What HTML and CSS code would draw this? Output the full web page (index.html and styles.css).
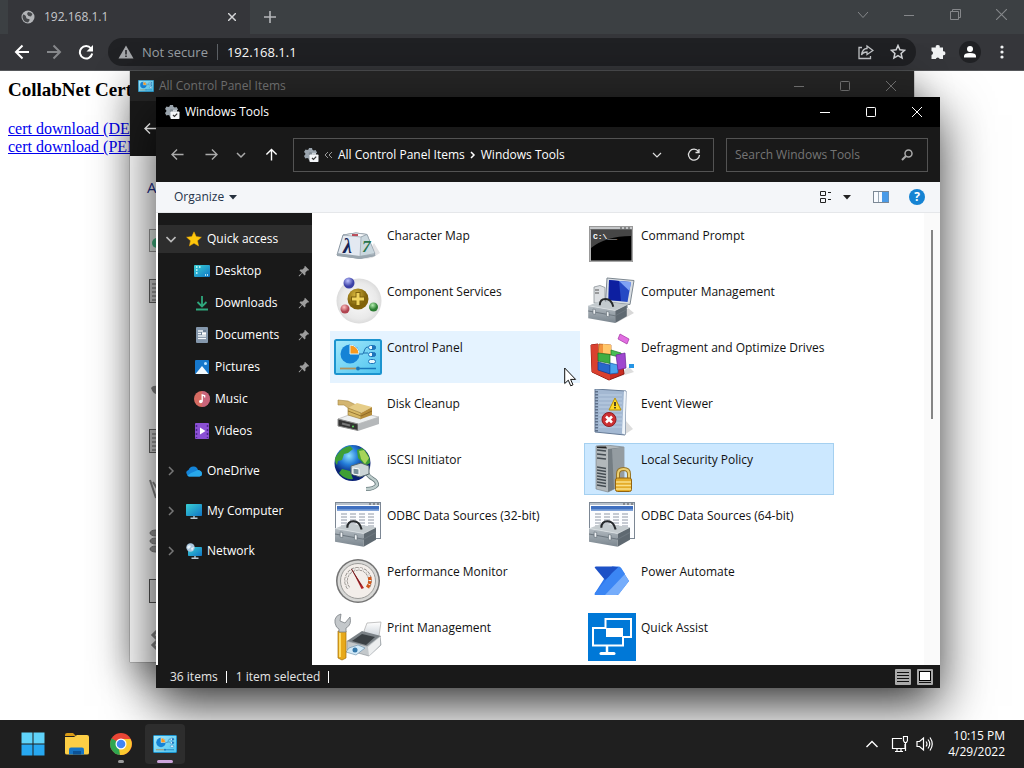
FILE: index.html
```html
<!DOCTYPE html>
<html lang="en">
<head>
  <meta charset="UTF-8" />
  <meta name="viewport" content="width=device-width, initial-scale=1.0"/>
  <title>Windows Tools</title>
  <link rel="stylesheet" href="styles.css">
</head>
<body>

<!-- Shared icons -->
<svg class="defs" aria-hidden="true">
  <defs>
    <linearGradient id="steel" x1="0" y1="0" x2="0" y2="1"><stop offset="0" stop-color="#b3bbc1"/><stop offset="1" stop-color="#7a858e"/></linearGradient>
    <linearGradient id="cpBg" x1="0" y1="0" x2="1" y2="1"><stop offset="0" stop-color="#a5e9fb"/><stop offset="1" stop-color="#4cc3ef"/></linearGradient>
    <linearGradient id="screen" x1="0" y1="0" x2="1" y2="1"><stop offset="0" stop-color="#3ad0d4"/><stop offset="1" stop-color="#0f74c6"/></linearGradient>
    <linearGradient id="paper" x1="0" y1="0" x2="0" y2="1"><stop offset="0" stop-color="#ffffff"/><stop offset="1" stop-color="#b9c3cc"/></linearGradient>
  </defs>
  <symbol id="tools" viewBox="0 0 16 16">
    <path d="M6 1h3l.4 1.8 1.4.7L12.500 3l1.600 2.500-1.300 1.300v1.700H7v5l-1-.2-.5-1.700-1.400-.7-1.800.5L1 8.900l1.300-1.300V6.200L1 4.900l1.500-2.500 1.700.5L5.500 2.500z" fill="#9aa4ad"/>
    <circle cx="7.500" cy="6.800" r="1.800" fill="#808a92"/>
    <path d="M9.500 7.500V6.300h3v1.200" fill="none" stroke="#d8dde2" stroke-width="1"/>
    <rect x="6.500" y="7.500" width="9" height="7.500" rx=".8" fill="#f4f6f8"/>
    <path d="M9 11l1.500 1.500 2.700-2.800" fill="none" stroke="#333" stroke-width="1.200"/>
  </symbol>
  <symbol id="cpanel" viewBox="0 0 48 36">
    <rect x="1" y="1" width="46" height="34" rx="1.500" fill="url(#cpBg)" stroke="#1c94cf" stroke-width="2"/>
    <circle cx="16" cy="15" r="9.500" fill="#1583d6"/>
    <path d="M16 15V6a9 9 0 0 1 9 9z" fill="#f9991d" stroke="#d8f5fd" stroke-width="1"/>
    <path d="M25 15h4l2-5q.5-2 3-2M30 14h4" fill="none" stroke="#1d6fae" stroke-width="1"/>
    <g fill="#e8f8fe" stroke="#1d75bb" stroke-width="1"><rect x="34.500" y="6.500" width="7" height="4" rx="2"/><rect x="34.500" y="13.500" width="7" height="4" rx="2"/><rect x="34.500" y="20.500" width="7" height="4" rx="2"/></g>
    <path d="M38 6.500h2a2 2 0 0 1 0 4h-2zM38 13.500h2a2 2 0 0 1 0 4h-2z" fill="#1d75bb"/>
    <path d="M6 29.500h16" stroke="#b0925c" stroke-width="1.800"/><path d="M26 29.500h16" stroke="#1878ba" stroke-width="1.500"/><circle cx="24" cy="29.500" r="2" fill="#1878ba"/>
  </symbol>
  <symbol id="toolbox" viewBox="0 0 42 28">
    <path d="M1 9l13-5 27 4-12 6z" fill="#c3cace"/>
    <path d="M1 9l28 5v13L1 22z" fill="url(#steel)"/>
    <path d="M29 14l12-6v12l-12 7z" fill="#5f6971"/>
    <path d="M1 9l28 5 12-6" fill="none" stroke="#dfe4e7" stroke-width=".7"/>
    <path d="M1 14.500l28 5 12-6.500" fill="none" stroke="#6c767e" stroke-width="1"/>
    <path d="M13 8.500Q13 2 19 2t8 8" fill="none" stroke="#26292c" stroke-width="2"/>
    <path d="M6 12.500l2.500.5v5L6 17.500zM20 15l2.500.5v5L20 20z" fill="#f0f3f5" stroke="#5f6a72" stroke-width=".6"/>
  </symbol>
  <symbol id="odbc" viewBox="0 0 48 48">
    <rect x="1.500" y="1.500" width="45" height="36" fill="#fcfdff" stroke="#7c8794"/>
    <rect x="2" y="2" width="44" height="2" fill="#b9c2cc"/><path d="M35 3h2M39 3h2M43 3h2" stroke="#555" stroke-width="1"/>
    <rect x="3" y="5" width="42" height="4.500" fill="#3f6fbf"/><rect x="3" y="8" width="42" height="1.500" fill="#6e97d3"/>
    <path d="M7 13h35M7 16h35M7 19h35M7 22h35M7 25h35M7 29h35" stroke="#9098a6" stroke-width="1" stroke-dasharray="6 3"/>
    <use href="#toolbox" x="0" y="18" width="43" height="29"/>
  </symbol>
  <symbol id="pin" viewBox="0 0 12 12"><path d="M7 .8L11.200 5l-1 .6-.8-.1-2 2 .1 2.100-.9.900-2.400-2.400L1.600 11.200H.8v-.8l3.100-2.600L1.500 5.400l.9-.9 2.100.1 2-2-.1-.8z" fill="#9d9d9d"/></symbol>
  <symbol id="expand" viewBox="0 0 10 10"><path d="M3 1l4 4-4 4" fill="none" stroke="#777" stroke-width="1.500"/></symbol>
  <symbol id="min" viewBox="0 0 10 10"><path d="M0 5.500h10" stroke="currentColor"/></symbol>
  <symbol id="max" viewBox="0 0 10 10"><rect x=".5" y=".5" width="9" height="9" rx=".8" fill="none" stroke="currentColor"/></symbol>
  <symbol id="close" viewBox="0 0 10 10"><path d="M0 0l10 10M10 0L0 10" stroke="currentColor"/></symbol>
  <symbol id="arrow" viewBox="0 0 14 14"><path d="M13.500 7H1.500M6.500 1.500L1 7l5.500 5.500" fill="none" stroke="currentColor" stroke-width="1.500"/></symbol>
</svg>

<main class="desktop">
  <!-- Browser -->
  <section class="browser">
    <div class="tabs">
      <div class="tab">
        <svg width="14" height="14" viewBox="0 0 14 14"><circle cx="7" cy="7" r="6.500" fill="#b3b5b8"/><path d="M2 4.500Q5 5 5 7t2.500 2-.5 3.500Q2 12 1.500 7zM7 2q3 0 4.500 2L10 6.500 7.500 6 6 4z" fill="#46484b"/></svg>
        <span>192.168.1.1</span>
        <button aria-label="Close tab"><svg width="8" height="8" viewBox="0 0 10 10"><path d="M0 0l10 10M10 0L0 10" stroke="#d5d6d8" stroke-width="1.800"/></svg></button>
      </div>
      <button class="new-tab" aria-label="New tab"><svg width="12" height="12" viewBox="0 0 12 12"><path d="M6 0v12M0 6h12" stroke="#b5b7ba" stroke-width="1.600"/></svg></button>
      <div class="controls">
        <button aria-label="Search tabs"><svg width="10" height="10" viewBox="0 0 10 10"><path d="M0 2l5 5.500L10 2" fill="none" stroke="currentColor"/></svg></button>
        <button aria-label="Minimize"><svg width="10" height="10"><use href="#min"/></svg></button>
        <button aria-label="Restore"><svg width="11" height="11" viewBox="0 0 11 11"><path d="M.5 2.500h8v8h-8zM2.500 2.500v-2h8v8h-2" fill="none" stroke="currentColor"/></svg></button>
        <button aria-label="Close"><svg width="11" height="11"><use href="#close"/></svg></button>
      </div>
    </div>
    <div class="toolbar">
      <button aria-label="Back"><svg width="16" height="16" viewBox="0 0 16 16"><path d="M15 8H2M8.500 1.500L2 8l6.500 6.500" fill="none" stroke="#fff" stroke-width="2"/></svg></button>
      <button aria-label="Forward"><svg width="16" height="16" viewBox="0 0 16 16"><path d="M1 8h13M7.500 1.500L14 8l-6.500 6.500" fill="none" stroke="#86888b" stroke-width="2"/></svg></button>
      <button aria-label="Reload"><svg width="16" height="16" viewBox="0 0 16 16"><path d="M13 4.500A6.200 6.200 0 1 0 14.200 9.500" fill="none" stroke="#fff" stroke-width="2"/><path d="M15 1v6.500H8.500z" fill="#fff"/></svg></button>
      <div class="omnibox">
        <svg width="16" height="14" viewBox="0 0 16 14"><path d="M8 .5L15.500 13.500H.5z" fill="#a5a7aa"/><path d="M8 5v4.500M8 10.500v1.600" stroke="#202124" stroke-width="1.500"/></svg>
        <label for="url">Not secure</label>
        <input id="url" type="text" value="192.168.1.1">
        <button aria-label="Share"><svg width="16" height="16" viewBox="0 0 16 16"><path d="M4 3.500H1v11h11.500V12M9 2l6 4.500-6 4V8q-4 0-5.500 3Q4.500 4.500 9 4.500z" fill="none" stroke="#c5c7ca" stroke-width="1.300"/></svg></button>
        <button aria-label="Bookmark"><svg width="16" height="16" viewBox="0 0 16 16"><path d="M8 1.500l1.900 4.300 4.700.5-3.500 3.200 1 4.600L8 11.700l-4.100 2.400 1-4.600L1.400 6.300l4.700-.5z" fill="none" stroke="#d5d7da" stroke-width="1.500"/></svg></button>
      </div>
      <button aria-label="Extensions"><svg width="16" height="16" viewBox="0 0 16 16"><path d="M2 3.500h3.800a2 2 0 1 1 3.900 0H13v3.800a2 2 0 1 1 0 3.900V15H9.700a2 2 0 0 0-3.900 0H1.500v-4a2 2 0 0 0 0-3.900V3.500z" fill="#f1f3f4"/></svg></button>
      <button aria-label="Profile"><svg width="22" height="22" viewBox="0 0 22 22"><circle cx="11" cy="11" r="11" fill="#202124"/><circle cx="11" cy="8" r="3" fill="#fff"/><path d="M5 16.500v-1.500q0-3 6-3t6 3v1.500z" fill="#fff"/></svg></button>
      <button aria-label="Menu"><svg width="16" height="16" viewBox="0 0 16 16" fill="#f1f3f4"><circle cx="8" cy="3" r="1.600"/><circle cx="8" cy="8" r="1.600"/><circle cx="8" cy="13" r="1.600"/></svg></button>
    </div>
    <article class="page">
      <h3>CollabNet Cert</h3>
      <a href="#der">cert download (DER)</a>
      <a href="#pem">cert download (PEM)</a>
    </article>
  </section>

  <!-- Control panel window, behind -->
  <section class="window back-window">
    <div class="titlebar">
      <svg width="16" height="12"><use href="#cpanel"/></svg>
      <span>All Control Panel Items</span>
      <div class="controls">
        <button aria-label="Minimize"><svg width="10" height="10"><use href="#min"/></svg></button>
        <button aria-label="Maximize"><svg width="10" height="10"><use href="#max"/></svg></button>
        <button aria-label="Close"><svg width="10" height="10"><use href="#close"/></svg></button>
      </div>
    </div>
    <div class="back-nav"><button aria-label="Back"><svg width="13" height="13"><use href="#arrow"/></svg></button></div>
    <div class="back-body">
      <h2>Adjust</h2>
      <div class="back-icons">
        <svg width="24" height="24" viewBox="0 0 24 24"><rect x=".5" y=".5" width="23" height="22" fill="#e8eee9" stroke="#999"/><circle cx="8" cy="14" r="5" fill="#42b883"/></svg>
        <svg width="24" height="24" viewBox="0 0 24 24"><rect x=".5" y=".5" width="23" height="23" fill="#d5d5d5" stroke="#666"/><path d="M3 5h18M3 9h18M3 13h18M3 17h18M3 21h18" stroke="#666"/></svg>
        <svg width="24" height="24" viewBox="0 0 24 24"></svg>
        <svg width="24" height="24" viewBox="0 0 24 24"><path d="M2 9q2-3 6-2v8q-4 0-6-6z" fill="#888"/></svg>
        <svg width="24" height="24" viewBox="0 0 24 24"><rect x=".5" y=".5" width="23" height="23" fill="#d5d5d5" stroke="#666"/><path d="M3 5h18M3 9h18M3 13h18M3 17h18M3 21h18" stroke="#666"/></svg>
        <svg width="24" height="24" viewBox="0 0 24 24"><path d="M1 1l6 18M4 3l5 8" stroke="#888" stroke-width="2"/></svg>
        <svg width="24" height="24" viewBox="0 0 24 24"><ellipse cx="7" cy="4" rx="6" ry="3" fill="#999" stroke="#777"/><ellipse cx="7" cy="12" rx="6" ry="3" fill="#999" stroke="#777"/><ellipse cx="7" cy="20" rx="6" ry="3" fill="#999" stroke="#777"/></svg>
        <svg width="24" height="24" viewBox="0 0 24 24"><rect x=".5" y=".5" width="23" height="23" fill="#e2e2e2" stroke="#555"/></svg>
        <svg width="24" height="24" viewBox="0 0 24 24"><path d="M8 2L4 6l4 4M8 12l-4 4 4 4" stroke="#888" stroke-width="3" fill="none"/></svg>
      </div>
    </div>
  </section>

  <!-- Windows Tools window -->
  <section class="window tools-window">
    <div class="titlebar">
      <svg width="16" height="16"><use href="#tools"/></svg>
      <span>Windows Tools</span>
      <div class="controls">
        <button aria-label="Minimize"><svg width="10" height="10"><use href="#min"/></svg></button>
        <button aria-label="Maximize"><svg width="10" height="10"><use href="#max"/></svg></button>
        <button aria-label="Close"><svg width="10" height="10"><use href="#close"/></svg></button>
      </div>
    </div>

    <nav class="navbar">
      <button class="dim" aria-label="Back"><svg width="13" height="13"><use href="#arrow"/></svg></button>
      <button class="dim" aria-label="Forward"><svg width="13" height="13" viewBox="0 0 14 14"><path d="M.5 7h12M7.500 1.500L13 7l-5.500 5.500" fill="none" stroke="currentColor" stroke-width="1.500"/></svg></button>
      <button class="dim narrow" aria-label="Recent locations"><svg width="10" height="10" viewBox="0 0 10 10"><path d="M1 3l4 4 4-4" fill="none" stroke="currentColor" stroke-width="1.500"/></svg></button>
      <button aria-label="Up"><svg width="13" height="13" viewBox="0 0 14 14"><path d="M7 13.500V1.500M1.500 7L7 1.500 12.500 7" fill="none" stroke="currentColor" stroke-width="1.500"/></svg></button>
      <div class="address">
        <svg width="16" height="16"><use href="#tools"/></svg>
        <svg width="9" height="8" viewBox="0 0 9 8"><path d="M4 1L1 4l3 3M8 1L5 4l3 3" fill="none" stroke="#999"/></svg>
        <button class="crumb">All Control Panel Items</button>
        <svg width="6" height="8" viewBox="0 0 6 8"><path d="M1 1l3 3-3 3" fill="none" stroke="#fff" stroke-width="1.500"/></svg>
        <button class="crumb">Windows Tools</button>
        <button class="drop" aria-label="Previous locations"><svg width="10" height="10" viewBox="0 0 10 10"><path d="M1 3l4 4 4-4" fill="none" stroke="#ddd" stroke-width="1.200"/></svg></button>
        <button class="reload" aria-label="Refresh"><svg width="14" height="14" viewBox="0 0 14 14"><path d="M11.500 3.500A5.500 5.500 0 1 0 12.500 7M12 1v3.500H8.500" fill="none" stroke="#ddd" stroke-width="1.300"/></svg></button>
      </div>
      <div class="search">
        <input type="text" aria-label="Search Windows Tools" placeholder="Search Windows Tools">
        <svg width="12" height="12" viewBox="0 0 12 12"><circle cx="7.500" cy="4.500" r="3.500" fill="none" stroke="#aaa" stroke-width="1.500"/><path d="M5 7L1 11" stroke="#aaa" stroke-width="2"/></svg>
      </div>
    </nav>

    <div class="commands">
      <button class="organize">Organize <svg width="8" height="5" viewBox="0 0 8 5"><path d="M0 0h8L4 4.500z" fill="#26303d"/></svg></button>
      <button aria-label="Change view"><svg width="12" height="12" viewBox="0 0 12 12"><path d="M.5.5h5v4h-5zM.5 7.500h5v4h-5z" fill="none" stroke="#222"/><path d="M8 1.500h4M8 8.500h4" stroke="#222" stroke-dasharray="3 1"/></svg></button>
      <button class="more" aria-label="More views"><svg width="8" height="5" viewBox="0 0 8 5"><path d="M0 0h8L4 4.500z" fill="#222"/></svg></button>
      <button class="pane" aria-label="Preview pane"><svg width="16" height="12" viewBox="0 0 16 12"><rect x=".5" y=".5" width="15" height="11" fill="#f8fbff" stroke="#7b8895"/><path d="M5.500 1v10" stroke="#9aa8b5"/><rect x="9" y="1" width="6.500" height="10" fill="#4a9be8"/></svg></button>
      <button aria-label="Help"><svg width="16" height="16" viewBox="0 0 16 16"><circle cx="8" cy="8" r="8" fill="#1583d3"/><text class="help" x="8" y="12" text-anchor="middle">?</text></svg></button>
    </div>

    <div class="content">
      <aside class="sidebar">
        <a href="#quick" class="root selected"><svg width="10" height="10" viewBox="0 0 10 10"><path d="M.5 3L5 7.500 9.500 3" fill="none" stroke="#bbb" stroke-width="1.600"/></svg>
          <svg width="16" height="16" viewBox="0 0 16 16"><path d="M8 .8l2.200 4.800 5.200.6-3.900 3.500 1.100 5.200L8 12.300l-4.600 2.600 1.100-5.200L.6 6.200l5.200-.6z" fill="#fdc70c" stroke="#e8a307" stroke-width=".5"/></svg>Quick access</a>
        <a href="#desktop"><svg width="16" height="16" viewBox="0 0 16 16"><rect y="2" width="16" height="12" rx="1" fill="url(#screen)"/><path d="M2 4h1.500M5 4h1.500M2 7h1.500M2 10h1.500M11 12h1M13 12h1" stroke="#dff" stroke-width="1.300"/></svg>Desktop<svg class="pin" width="12" height="12"><use href="#pin"/></svg></a>
        <a href="#downloads"><svg width="16" height="16" viewBox="0 0 16 16"><path d="M8 1v10M3.500 7L8 11.500 12.500 7M2 14.500h12" fill="none" stroke="#2fa77d" stroke-width="1.800"/></svg>Downloads<svg class="pin" width="12" height="12"><use href="#pin"/></svg></a>
        <a href="#documents"><svg width="16" height="16" viewBox="0 0 16 16"><rect x="2" y="0" width="12" height="16" rx="1" fill="#8497ac"/><rect x="4" y="3" width="8" height="10" fill="#6e8196"/><path d="M4 4h5M4 6.500h3M4 9h8M4 11.500h8" stroke="#f4f8fb" stroke-width="1.300"/><rect x="8" y="5.300" width="4" height="2.500" fill="#fff"/></svg>Documents<svg class="pin" width="12" height="12"><use href="#pin"/></svg></a>
        <a href="#pictures"><svg width="16" height="16" viewBox="0 0 16 16"><rect x="1" y="1" width="14" height="14" rx="1" fill="#1677cb"/><path d="M1.500 15L8 7l6.500 8z" fill="#f3faff"/><circle cx="11.500" cy="4.500" r="1.500" fill="#bfe6ff"/></svg>Pictures<svg class="pin" width="12" height="12"><use href="#pin"/></svg></a>
        <a href="#music"><svg width="16" height="16" viewBox="0 0 16 16"><circle cx="8" cy="8" r="8" fill="#d66b62"/><path d="M8 0a8 8 0 0 1 0 16z" fill="#bf608c" opacity=".6"/><circle cx="6.800" cy="10.500" r="1.800" fill="#fff"/><path d="M8.200 10.500V4l2.500.8v1.700" fill="none" stroke="#fff" stroke-width="1.300"/></svg>Music</a>
        <a href="#videos"><svg width="16" height="16" viewBox="0 0 16 16"><rect x="1" width="14" height="16" rx="1" fill="#8a4fd3"/><path d="M2.500 2v13M13.500 2v13" stroke="#4d2590" stroke-width="1.500" stroke-dasharray="2 2"/><path d="M6 4.500l5.500 3.500L6 11.500z" fill="#fff"/></svg>Videos</a>
        <a href="#onedrive" class="root apart"><svg width="10" height="10"><use href="#expand"/></svg>
          <svg width="16" height="16" viewBox="0 0 16 16"><path d="M1 11.500Q-1 8 2.500 7 4 3 8 3.500q3 .3 4 3.500 4 .5 4 4 0 2-2.500 2.500H3Q1.500 13.300 1 11.500z" fill="#1484d8"/><path d="M5 10l7-3q4 .5 4 4 0 2-2.500 2.500H3Q2 13.200 1.500 12.500z" fill="#28a8ea"/></svg>OneDrive</a>
        <a href="#computer" class="root apart"><svg width="10" height="10"><use href="#expand"/></svg>
          <svg width="16" height="16" viewBox="0 0 16 16"><rect y="1" width="16" height="12" rx=".8" fill="url(#screen)"/><path d="M8 13v2M4.500 15.200h7" stroke="#b9c9d3" stroke-width="1.400"/></svg>My Computer</a>
        <a href="#network" class="root apart"><svg width="10" height="10"><use href="#expand"/></svg>
          <svg width="16" height="16" viewBox="0 0 16 16"><rect x="2" y="4" width="14" height="9" rx=".8" fill="url(#screen)"/><path d="M9 13v2M5.500 15.200h7" stroke="#b9c9d3" stroke-width="1.400"/><circle cx="4.500" cy="4.500" r="4.200" fill="#acc8df"/><path d="M1 4q2-3 4-1l-1 2-2 1zM5 5l3-1-2 4z" fill="#e8f4fb"/></svg>Network</a>
      </aside>

      <div class="items">
        <a href="#charmap" class="item">
          <svg width="48" height="48" viewBox="0 0 48 48"><path d="M30 38l10-16 6 10-8 5z" fill="#e4e4e6"/><path d="M9 14l13-2 11 1.500 8 21-15 3L3 34z" fill="#e3e9f1" stroke="#8794a0"/><path d="M9 14l13-2 11 1.500-6 2.500z" fill="#f7f9fb" stroke="#929ea8" stroke-width=".7"/><path d="M27 16l6-2.500 8 19-15 3z" fill="#cad7de" stroke="#8b99a2" stroke-width=".6"/><path d="M3 32l23 3 15-2v2l-15 3-23-3z" fill="#9ba7b0"/><path d="M18 14h6" stroke="#b53b4a" stroke-width="1.800"/><text class="lambda" x="9" y="32">λ</text><text class="seven" x="28" y="31">7</text></svg>
          <span>Character Map</span></a>
        <a href="#cmd" class="item">
          <svg width="48" height="48" viewBox="0 0 48 48"><rect x="1.500" y="5.500" width="43" height="35" fill="#000" stroke="#999" /><rect x="2" y="6" width="42" height="2.500" fill="#c5c7c9"/><path d="M32 7h2M36 7h2M40 7h2" stroke="#444"/><path d="M3 9h40v6Q18 15 3 27z" fill="#464646"/><path d="M2.500 8.500v31.500h41.500V8.500" fill="none" stroke="#b5b5b5"/><text class="prompt" x="5" y="18">C:\__</text></svg>
          <span>Command Prompt</span></a>
        <a href="#comexp" class="item">
          <svg width="48" height="48" viewBox="0 0 48 48"><defs><radialGradient id="disc"><stop offset="0" stop-color="#fafafa"/><stop offset=".8" stop-color="#e9e9e9"/><stop offset="1" stop-color="#dcdcdc"/></radialGradient><radialGradient id="gold" cx=".4" cy=".3"><stop offset="0" stop-color="#d9b93e"/><stop offset="1" stop-color="#80620b"/></radialGradient><radialGradient id="blue" cx=".4" cy=".3"><stop offset="0" stop-color="#bfc4ff"/><stop offset="1" stop-color="#3b40a6"/></radialGradient><radialGradient id="red" cx=".4" cy=".3"><stop offset="0" stop-color="#ffc1c1"/><stop offset="1" stop-color="#b04450"/></radialGradient><radialGradient id="green" cx=".4" cy=".3"><stop offset="0" stop-color="#b5efb1"/><stop offset="1" stop-color="#2b7d31"/></radialGradient></defs><circle cx="25" cy="24" r="22.500" fill="url(#disc)"/><circle cx="24" cy="22" r="10.500" fill="url(#gold)"/><path d="M24 15v14M17 22h14" stroke="#7d610d" stroke-width="5"/><path d="M24 16v12M18 22h12" stroke="#f0d45e" stroke-width="3"/><circle cx="15" cy="6" r="5.500" fill="url(#blue)"/><circle cx="11" cy="32" r="4.500" fill="url(#red)"/><circle cx="39.500" cy="30" r="4.500" fill="url(#green)"/></svg>
          <span>Component Services</span></a>
        <a href="#compmgmt" class="item">
          <svg width="48" height="48" viewBox="0 0 48 48"><path d="M28 46l18-10-6-5z" fill="#d8d8d8"/><path d="M6 10l6-1.500 5 2V26H6z" fill="#dcdfe2" stroke="#8d9499" stroke-width=".8"/><path d="M7 13h4M7 16h4" stroke="#555"/><path d="M19 1l27 2.500-4 24L17.500 25z" fill="#d8dde3" stroke="#7d8891"/><path d="M21 3l22 2-3.500 20-19-2z" fill="#2549c4"/><path d="M21 3l10 1 2 20-12.500-1z" fill="#0d1fa0"/><path d="M31 4l12 1-1.500 9z" fill="#7fa2f4"/><path d="M24 26l-4 5h20v-4z" fill="#aeb7be"/><use href="#toolbox" x="-1" y="20" width="41" height="27"/></svg>
          <span>Computer Management</span></a>
        <a href="#control" class="item hovered">
          <svg width="48" height="48" viewBox="0 0 48 48"><use href="#cpanel" y="6" width="48" height="36"/></svg>
          <span>Control Panel</span></a>
        <a href="#defrag" class="item">
          <svg width="48" height="48" viewBox="0 0 48 48"><path d="M24 46l22-7-5-5z" fill="#ddd"/><path d="M3 12l7-1v22l15 4 10-3 1 7-15 6-17-8z" fill="#c92d22" stroke="#8e1710"/><path d="M3 12l7-1v25l12 5v6L4 39z" fill="#d9402f"/><path d="M11 11l12 1v10H10z" fill="#f1923b" stroke="#b1540f" stroke-width=".7"/><path d="M15 11l8 1v9l-8-1z" fill="#ffc66a"/><path d="M10 20l12 1.500v9L10 28z" fill="#3dae43" stroke="#1d7222" stroke-width=".7"/><path d="M23 17l10 3 2 5-12-3z" fill="#48bd55" stroke="#207b2a" stroke-width=".7"/><path d="M10 29l12 3v9l-12-4z" fill="#2867cb" stroke="#103a91" stroke-width=".7"/><path d="M22 30l8 2v8l-8 1z" fill="#4ba3ed" stroke="#1557aa" stroke-width=".7"/><path d="M28 22l9-2 1 15-8 2z" fill="#9f47cf" stroke="#682398" stroke-width=".7"/><path d="M30 6l9 5 2-5-9-5z" fill="#e16ee1" stroke="#a232a2" stroke-width=".7"/><path d="M41 31h5v4h-5z" fill="#2695e5"/></svg>
          <span>Defragment and Optimize Drives</span></a>
        <a href="#cleanup" class="item">
          <svg width="48" height="48" viewBox="0 0 48 48"><path d="M4 30l19-7 22 5-21 7z" fill="#edf0f1" stroke="#aaa" stroke-width=".6"/><path d="M4 30l20 5v6.500L4 37z" fill="#333" stroke="#8d8d8d"/><path d="M24 35l21-7v7l-21 7z" fill="#b5b8ba"/><path d="M8 34.500l8 2" stroke="#777" stroke-width="2"/><circle cx="19" cy="37.500" r="1" fill="#5cdb5c"/><path d="M4 11l10 1 10 5-6 5-8-6H4z" fill="#d3b570" stroke="#a58742" stroke-width=".6"/><path d="M14 19l9-5 15 4-11 6z" fill="#e6cd88"/><path d="M14 19l13 5v6l-13-4z" fill="#d7b863" stroke="#947330" stroke-width=".6"/><path d="M27 24l11-6v8l-11 4z" fill="#b58c3a"/><path d="M14 22l13 5 11-5" fill="none" stroke="#7e5c20" stroke-width=".7"/></svg>
          <span>Disk Cleanup</span></a>
        <a href="#eventvwr" class="item">
          <svg width="48" height="48" viewBox="0 0 48 48"><path d="M36 46l9-6-7-8z" fill="#ddd"/><path d="M7 0l31 2-1 44-30-3z" fill="#a3b8d2" stroke="#667b96"/><path d="M36 2l2 .5-1 43-3-1z" fill="#eef4fa"/><path d="M11 6h23M11 10h23M11 14h23M11 18h23M11 22h23M11 26h23M11 30h23M11 34h23M11 38h23" stroke="#bccfe4"/><path d="M8.500 2v41" stroke="#5f7089" stroke-width="3" stroke-dasharray="1.500 1.500"/><path d="M27 9l6 12H21z" fill="#ffda27" stroke="#b79008"/><path d="M27 13v4M27 18v1.500" stroke="#222" stroke-width="1.600"/><circle cx="21" cy="30.500" r="7" fill="#cd3033" stroke="#8f1c20"/><path d="M18 27.500l6 6M24 27.500l-6 6" stroke="#fff" stroke-width="2.500"/></svg>
          <span>Event Viewer</span></a>
        <a href="#iscsi" class="item">
          <svg width="48" height="48" viewBox="0 0 48 48"><defs><radialGradient id="ocean" cx=".4" cy=".3"><stop offset="0" stop-color="#8fe3ff"/><stop offset=".5" stop-color="#237bd8"/><stop offset="1" stop-color="#0a2376"/></radialGradient></defs><circle cx="18.500" cy="18" r="18" fill="url(#ocean)"/><path d="M3 10Q8 2 16 1l3 3-5 4-4 1-2 6-4 1-1 4Q-1 15 3 10zM23 5l5-2q8 6 8 15l-5 3-3-4-4-4zM8 24l8 2 3 8q-8 1-14-6z" fill="#3f9f35"/><path d="M25 6l5-1 5 8-4 6-4-5z" fill="#a6d45b"/><path d="M32 27q3 5 7 7t4 6q-3 4-11 4" fill="none" stroke="#687b7e" stroke-width="4"/><path d="M32 27q3 5 7 7t4 6q-3 4-11 4" fill="none" stroke="#bdcccb" stroke-width="2.500"/><path d="M17 21l10-3 8 3v8l-9 3-9-3z" fill="#cbd5d7" stroke="#56676c"/><path d="M19 23l6 1v6l-6-1z" fill="#789098" stroke="#fff"/></svg>
          <span>iSCSI Initiator</span></a>
        <a href="#secpol" class="item selected">
          <svg width="48" height="48" viewBox="0 0 48 48"><path d="M8 1l10-1 18 2v37l-16 8L8 44z" fill="#b2b8bb" stroke="#737b80" stroke-width=".6"/><path d="M20 4l16-2v37l-16 8z" fill="#747d83"/><path d="M24 4l12-2v37l-10 5z" fill="#949ca1"/><path d="M9 5l9 1M9 9l9 1M9 13l9 1M9 22l9 1.500M9 25l9 1.500M9 28l9 1.500M9 31l9 1.500M9 34l9 1.500M9 37l9 1.500M9 40l9 1.500" stroke="#454d53" stroke-width="1.500"/><path d="M9 1.500h9l1 2-10-.5z" fill="#222"/><path d="M30 35v-6q0-5 5.500-5t5.500 5v6" fill="none" stroke="#977528" stroke-width="4"/><path d="M30 35v-6q0-5 5.500-5t5.500 5v6" fill="none" stroke="#edd073" stroke-width="2"/><rect x="27.500" y="33" width="16" height="13.500" rx="2" fill="#e4ac29" stroke="#926412"/><path d="M28 37h15M28 40.500h15M28 44h15" stroke="#fae088" stroke-width="1.300"/></svg>
          <span>Local Security Policy</span></a>
        <a href="#odbc32" class="item"><svg width="48" height="48"><use href="#odbc"/></svg><span>ODBC Data Sources (32-bit)</span></a>
        <a href="#odbc64" class="item"><svg width="48" height="48"><use href="#odbc"/></svg><span>ODBC Data Sources (64-bit)</span></a>
        <a href="#perfmon" class="item">
          <svg width="48" height="48" viewBox="0 0 48 48"><circle cx="24" cy="24" r="22" fill="#747474"/><circle cx="24" cy="24" r="20.500" fill="#d8d8d6"/><circle cx="24" cy="24" r="17.500" fill="#f3eeea" stroke="#9c9c9a"/><path d="M14.500 31a12 12 0 1 1 19.500-.5" fill="none" stroke="#8a8580" stroke-width="3.500" stroke-dasharray="3 1"/><path d="M14.500 31a12 12 0 1 1 19.500-.5" fill="none" stroke="#f5f2ef" stroke-width="2" stroke-dasharray="3 1"/><path d="M35.500 20q1.500 6-2.500 11" fill="none" stroke="#d1581b" stroke-width="3.500" stroke-dasharray="3 1"/><path d="M17.500 12L30 31l-2.500 1z" fill="#b22327"/><path d="M17.500 12L27 28" stroke="#712022" stroke-width="1"/></svg>
          <span>Performance Monitor</span></a>
        <a href="#automate" class="item">
          <svg width="48" height="48" viewBox="0 0 48 48"><path d="M24 9.500h6q2 0 3 2L41 24 30 38H8q-2 0-1-2z" fill="#2e78ee"/><path d="M32.500 11L41 24 31 37q-1 1-3 1H15l17-20z" fill="#76adfb"/><path d="M7 11q-1-1.500 1-1.500h17l7 1L17 23z" fill="#1d51c6"/><path d="M24 16l7-6.500q1.500.5 2.500 2L37 17 17 38H8q-2 0-1-2z" fill="#3b86f4"/></svg>
          <span>Power Automate</span></a>
        <a href="#printmgmt" class="item">
          <svg width="48" height="48" viewBox="0 0 48 48"><path d="M30 18l3-8 14-1-2 14-5 6z" fill="url(#paper)" stroke="#ababab" stroke-width=".7"/><path d="M13 28l15-10 19 5-13 13z" fill="#7b8287"/><path d="M18 28l10-7 13 3-9 8z" fill="#3b4145"/><path d="M13 28l20 5 13-10 1 9-12 11-22-6z" fill="#c3c8cb" stroke="#848c91" stroke-width=".6"/><path d="M34 34l12-10v8L35 43z" fill="#eceeef"/><path d="M15 35l9-3 7 3-9 7-10-3z" fill="#d3eaf8" stroke="#6389a6" stroke-width=".6"/><circle cx="21" cy="37" r="2.500" fill="#3478aa"/><path d="M4 18h8v27l-4 2-4-2z" fill="#e7a91c" stroke="#a06e08" stroke-width=".7"/><path d="M6 20v24" stroke="#ffdc65" stroke-width="2"/><path d="M7 1Q0 3 1 10q1 5 4 6v3h7v-4q6-3 4-11l-5 6-5-2z" fill="#c4c8cb" stroke="#7c8286" stroke-width=".8"/></svg>
          <span>Print Management</span></a>
        <a href="#assist" class="item">
          <svg width="48" height="48" viewBox="0 0 48 48"><rect width="48" height="48" fill="#0078d7"/><path d="M17.500 15V6h25.500v18H35" fill="none" stroke="#fff" stroke-width="2"/><path d="M18 15H5v17.500h30V24" fill="none" stroke="#fff" stroke-width="2"/><rect x="18" y="15" width="17" height="9" fill="#fff"/><path d="M19 32v9" stroke="#fff" stroke-width="2.500"/><path d="M13 40.500h13" stroke="#fff" stroke-width="3" stroke-linecap="round"/></svg>
          <span>Quick Assist</span></a>
      </div>
      <div class="scrollbar"><div class="thumb"></div></div>
    </div>

    <footer class="status">
      <span>36 items</span>
      <span>1 item selected</span>
      <button aria-label="Details view"><svg width="16" height="16" viewBox="0 0 16 16"><rect width="16" height="16" rx="1" fill="#aaa"/><path d="M2 3.500h12M2 6.500h12M2 9.500h12M2 12.500h12" stroke="#111"/></svg></button>
      <button aria-label="Large icons view"><svg width="16" height="16" viewBox="0 0 16 16"><rect width="16" height="16" rx="1" fill="#aaa"/><rect x="2.500" y="2.500" width="11" height="9" fill="#fff" stroke="#000"/><path d="M2 13.500h12" stroke="#111"/></svg></button>
    </footer>
  </section>

  <svg class="cursor" width="13" height="20" viewBox="0 0 13 20"><path d="M.7 1v15.500l3.600-3.300 2.400 5.600 2.300-1-2.400-5.400h5z" fill="#fff" stroke="#111"/></svg>
</main>

<!-- Taskbar -->
<footer class="taskbar">
  <button aria-label="Start"><svg width="24" height="24" viewBox="0 0 24 24"><path d="M.5.500h11v11H.5zM12.500.500h11v11h-11z" fill="#5fd3fa"/><path d="M.5 12.500h11v11H.5zM12.500 12.500h11v11h-11z" fill="#27a8f1"/></svg></button>
  <button aria-label="File Explorer"><svg width="24" height="24" viewBox="0 0 24 24"><path d="M0 3q0-2 2-2h6l3 3H0z" fill="#d99a15"/><path d="M0 5h9l3-2h10q2 0 2 2v16q0 1.500-2 1.500H2Q0 22.500 0 21z" fill="#fcce45"/><path d="M4 22.500v-5q0-2 2-2h11q2 0 2 2v5z" fill="#1674c4"/><path d="M8 22.500V19h8v3.500z" fill="#0c5295"/></svg></button>
  <button aria-label="Chrome"><svg width="24" height="24" viewBox="0 0 24 24"><circle cx="12" cy="12" r="11" fill="#e94535"/><path d="M12 12L2.500 6.500A11 11 0 0 0 11 23z" fill="#2fa650"/><path d="M12 12l-1 11A11 11 0 0 0 21.500 7H12z" fill="#fbca2f"/><path d="M12 12l-5 3L2.500 6.500z" fill="#2fa650"/><path d="M16.500 14.500L11 23l-1-6z" fill="#fbca2f"/><circle cx="12" cy="12" r="5.500" fill="#fff"/><circle cx="12" cy="12" r="4.300" fill="#4285f4"/></svg></button>
  <button class="active" aria-label="Control Panel"><svg width="24" height="18"><use href="#cpanel"/></svg></button>
  <div class="tray">
    <button aria-label="Show hidden icons"><svg width="12" height="12" viewBox="0 0 12 12"><path d="M.5 9L6 3.500 11.500 9" fill="none" stroke="#fff" stroke-width="1.400"/></svg></button>
    <button aria-label="Network"><svg width="17" height="17" viewBox="0 0 17 17"><path d="M11 2.500H1.500v10H14V8M4 15.500h8M6 12.500v3M10 12.500v3M12.500.500h4v4l-1 2h-2l-1-2zM14.500 7v8" fill="none" stroke="#fff" stroke-width="1.200"/></svg></button>
    <button aria-label="Volume"><svg width="17" height="16" viewBox="0 0 17 16"><path d="M1 5.500h2.500L7.500 2v12l-4-3.500H1z" fill="none" stroke="#fff" stroke-width="1.200"/><path d="M10 5.500q2 2.500 0 5M12 3.500q3.500 4.500 0 9M14 1.500q4.500 6.500 0 13" fill="none" stroke="#fff" stroke-width="1.200"/></svg></button>
    <time>10:15 PM<br>4/29/2022</time>
  </div>
</footer>

</body>
</html>
```
FILE: styles.css
```css
* { box-sizing: border-box; }

body {
  margin: 0;
  height: 100vh;
  display: flex;
  flex-direction: column;
  overflow: hidden;
  font-family: "Segoe UI", "Open Sans", "Noto Sans", sans-serif;
  font-size: 12px;
  line-height: 16px;
}

button, input {
  font: inherit;
  color: inherit;
  background: transparent;
  border: none;
  padding: 0;
  margin: 0;
}

button {
  display: flex;
  align-items: center;
  justify-content: center;
}

input { outline: none; min-width: 0; }
a { text-decoration: none; }
svg { flex: none; }
.defs { position: absolute; width: 0; height: 0; }

.desktop {
  flex: 1;
  display: flex;
  position: relative;
  overflow: hidden;
}

/* Browser */
.browser {
  flex: 1;
  display: flex;
  flex-direction: column;
  background: white;
}

.tabs {
  display: flex;
  height: 34px;
  padding-left: 8px;
  background: #3c4043;
}

.tab {
  width: 242px;
  display: flex;
  align-items: center;
  gap: 9px;
  padding: 0 12px 0 13px;
  background: #35363a;
  color: #c5c7ca;
}

.tab button { margin-left: auto; width: 12px; height: 16px; }
.new-tab { width: 40px; }

.controls {
  display: flex;
  margin-left: auto;
}

.controls button { width: 46px; }
.tabs .controls { height: 29px; color: #85878a; }

.toolbar {
  display: flex;
  align-items: center;
  height: 37px;
  padding: 0 6px;
  background: #35363a;
  border-bottom: 1px solid #56585b;
}

.toolbar button { width: 32px; height: 32px; }

.omnibox {
  flex: 1;
  display: flex;
  align-items: center;
  height: 28px;
  margin: 0 6px;
  padding: 0 2px 0 10px;
  border-radius: 14px;
  background: #202124;
  font-size: 13px;
  color: #9aa0a6;
}

.omnibox label {
  margin: 0 9px 0 8px;
  padding-right: 9px;
  border-right: 1px solid #5f6368;
}

.omnibox input { flex: 1; color: white; }

.page {
  padding: 8px;
  font-family: "Liberation Serif", serif;
  font-size: 16px;
  line-height: 18px;
}

.page h3 {
  margin: 0 0 19px;
  font-size: 19px;
  line-height: 22px;
}

.page a {
  display: block;
  color: #0000ee;
  text-decoration: underline;
}

/* Windows */
.window {
  position: absolute;
  display: flex;
  flex-direction: column;
  width: 784px;
  height: 591px;
}

.back-window {
  left: 130px;
  top: 71px;
  background: white;
  box-shadow: 0 12px 36px rgba(0, 0, 0, 0.45), 0 0 1px #333;
}

.tools-window {
  left: 156px;
  top: 97px;
  background: white;
  box-shadow: 0 18px 48px rgba(0, 0, 0, 0.75);
}

.titlebar {
  flex: none;
  display: flex;
  align-items: center;
  gap: 5px;
  height: 30px;
  padding-left: 8px;
  background: black;
  color: white;
}

.titlebar .controls { align-self: stretch; }
.back-window .titlebar { background: #252525; color: #757575; }

.back-nav {
  flex: none;
  display: flex;
  align-items: center;
  height: 55px;
  padding-left: 14px;
  background: #191919;
  color: white;
}

.back-body {
  flex: 1;
  min-height: 0;
  padding: 22px 17px 0;
  overflow: hidden;
}

.back-body h2 {
  margin: 0 0 33px;
  font-size: 15px;
  line-height: 18px;
  font-weight: normal;
  color: #1e2f8c;
}

.back-icons {
  display: flex;
  flex-direction: column;
  gap: 26px;
  padding-left: 2px;
}

.navbar {
  flex: none;
  display: flex;
  align-items: center;
  height: 55px;
  padding: 0 12px 0 4px;
  background: #191919;
  color: white;
}

.navbar > button { width: 34px; height: 32px; }
.navbar > .narrow { width: 26px; }
.navbar .dim { color: #aaa; }

.address {
  flex: 1;
  display: flex;
  align-items: center;
  gap: 5px;
  height: 34px;
  margin: 0 12px 0 5px;
  padding: 0 12px 0 9px;
  border: 1px solid #535353;
}

.crumb { font-weight: 500; }
.drop { margin-left: auto; }
.reload { margin-left: 20px; }

.search {
  display: flex;
  align-items: center;
  width: 202px;
  height: 34px;
  padding: 0 14px 0 8px;
  border: 1px solid #535353;
}

.search input { flex: 1; }
.search input::placeholder { color: #757575; opacity: 1; }

.commands {
  display: flex;
  align-items: center;
  height: 31px;
  padding: 0 15px 0 18px;
  background: #f4f6f9;
  border-bottom: 1px solid #e5e7ea;
  color: #26344a;
}

.organize { margin-right: auto; gap: 5px; }
.more { margin: 0 22px 0 11px; }
.pane { margin-right: 20px; }

.help {
  font-size: 12px;
  font-weight: bold;
  fill: white;
}

.content {
  flex: 1;
  display: flex;
  min-height: 0;
  border-left: 2px solid white;
}

.sidebar {
  display: flex;
  flex-direction: column;
  gap: 4px;
  width: 154px;
  padding-top: 12px;
  background: #191919;
}

.sidebar a {
  display: flex;
  align-items: center;
  gap: 5px;
  height: 28px;
  padding: 0 2px 0 36px;
  color: white;
}

.sidebar .root { padding-left: 8px; }
.sidebar .root svg:first-child { margin-right: 5px; }
.sidebar .apart { margin-top: 8px; }
.sidebar .selected { background: #2d2d2d; }
.pin { margin-left: auto; }

.items {
  flex: 1;
  display: grid;
  grid-template-columns: 250px 250px;
  grid-auto-rows: 52px;
  gap: 4px;
  padding: 6px 0 0 18px;
  overflow: hidden;
}

.item {
  display: flex;
  gap: 5px;
  padding: 1px 3px;
  border: 1px solid transparent;
  color: #111;
}

.item span { padding-top: 7px; }
.item.hovered { background: #e5f3ff; }
.item.selected { background: #cce8ff; border-color: #a5d0f0; }

.lambda { font: bold italic 20px "Liberation Serif", serif; fill: #172356; }
.seven { font: bold italic 17px "Liberation Serif", serif; fill: #28744b; }
.prompt { font: bold 8px "Liberation Mono", monospace; fill: white; }

.scrollbar {
  width: 16px;
  padding: 17px 7px;
  background: #fafafa;
}

.thumb {
  height: 189px;
  background: #858585;
}

.status {
  display: flex;
  align-items: center;
  height: 23px;
  padding: 0 7px 0 14px;
  background: #191919;
  color: #e5e5e5;
}

.status span {
  display: flex;
  gap: 8px;
  margin-right: 9px;
}

.status span::after {
  content: "";
  width: 1px;
  height: 12px;
  align-self: center;
  background: white;
}

.status span + button { margin-left: auto; }
.status button + button { margin-left: 6px; }

.cursor {
  position: absolute;
  left: 564px;
  top: 367px;
}

/* Taskbar */
.taskbar {
  display: flex;
  align-items: center;
  gap: 4px;
  height: 48px;
  padding: 0 19px 0 13px;
  background: #1f1f1f;
  color: white;
}

.taskbar > button {
  position: relative;
  width: 40px;
  height: 40px;
  border-radius: 4px;
}

.taskbar > .active { background: #2d2d2d; }

.taskbar > button:nth-of-type(n + 3)::after {
  content: "";
  position: absolute;
  bottom: 1px;
  left: 17px;
  width: 6px;
  height: 3px;
  border-radius: 2px;
  background: #9a9a9a;
}

.taskbar > .active::after {
  left: 12px !important;
  width: 16px !important;
  background: #cda5dc !important;
}

.tray {
  display: flex;
  align-items: center;
  margin-left: auto;
}

.tray button { margin-right: 8px; }
.tray button:first-child { margin-right: 13px; }
.tray time { margin-left: 7px; text-align: right; }
```
